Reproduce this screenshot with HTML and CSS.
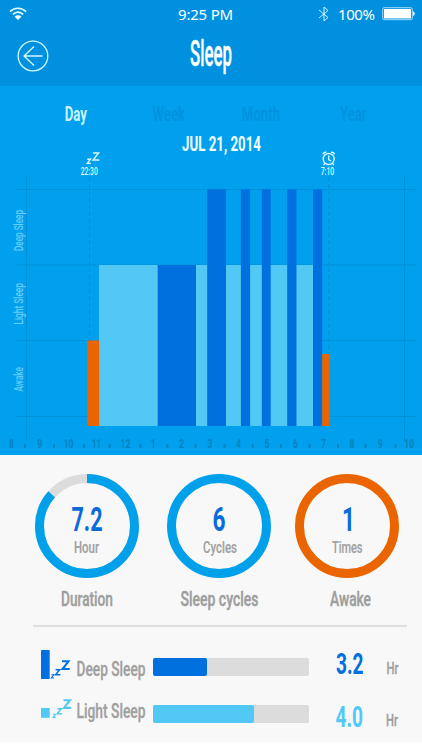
FILE: index.html
```html
<!DOCTYPE html>
<html lang="en">

<head>
    <meta charset="UTF-8">
    <meta name="viewport" content="width=device-width, initial-scale=1.0">
    <title>Sleep</title>
    <link rel="stylesheet" href="styles.css">
</head>

<body>
    <header>
        <div class="status">
            <svg class="wifi" width="18" height="14" viewBox="0 0 18 14">
                <path d="M1 4.6C5.5.2 12.5.2 17 4.6M3.8 7.4C7 4.5 11 4.5 14.2 7.4" />
                <path class="solid" d="M5.500 9.4C7.5 7.8 10.5 7.8 12.5 9.4L9 13z" />
            </svg>
            <span class="clock">9:25 PM</span>
            <svg class="bluetooth" width="12" height="16" viewBox="0 0 12 16">
                <path d="M1 4l9 7.5L6 15V1l4 3.500L1 12" />
            </svg>
            <span class="percent">100%</span>
            <svg class="battery" width="33" height="14" viewBox="0 0 33 14">
                <rect class="case" x=".7" y=".7" width="29.6" height="12" rx="1.5" />
                <rect class="solid" x="2" y="2" width="27" height="9.5" rx=".5" />
                <path class="solid" d="M31 4.5c2.3 .5 2.3 3.9 0 4.4z" />
            </svg>
        </div>
        <div class="titlebar">
            <svg class="back" width="32" height="32" viewBox="0 0 32 32">
                <circle cx="16" cy="16" r="14.8" />
                <path d="M25.5 16H7M17 6.5L7 16l10 9.5" />
            </svg>
            <svg class="title" width="44" height="40" viewBox="0 0 44 40">
                <text x="1" y="28.5" textLength="42" lengthAdjust="spacingAndGlyphs">Sleep</text>
            </svg>
        </div>
    </header>

    <section class="day">
        <nav class="tabs">
            <a class="active"><span>Day</span></a>
            <a><span>Week</span></a>
            <a><span>Month</span></a>
            <a><span>Year</span></a>
        </nav>
        <svg class="chart" width="422" height="325" viewBox="0 130 422 325">
            <text class="date" x="182" y="151.3" textLength="79" lengthAdjust="spacingAndGlyphs">JUL 21, 2014</text>

            <g class="grid">
                <path d="M17 189.5H417M17 265H417M17 340.5H417M17 416.5H417M26.5 176V442M404.5 176V440" />
                <path class="dashed" d="M89.5 177V429M328.7 177V429" />
            </g>

            <g class="light">
                <rect x="99" y="265" width="59" height="161" />
                <rect x="196" y="265" width="117" height="161" />
            </g>
            <g class="deep">
                <rect x="157.7" y="265" width="38.3" height="161" />
                <rect x="207.2" y="189.3" width="18.8" height="236.7" />
                <rect x="240.9" y="189.3" width="9.2" height="236.7" />
                <rect x="261.8" y="189.3" width="8.9" height="236.7" />
                <rect x="287.2" y="189.3" width="9.3" height="236.7" />
                <rect x="313" y="189.3" width="9.2" height="236.7" />
            </g>
            <g class="awake">
                <rect x="87.2" y="340.5" width="11.9" height="85.5" />
                <rect x="322.2" y="354" width="7.3" height="72" />
            </g>

            <!-- fell asleep / alarm -->
            <g class="marker">
                <path d="M87.3 159.2h3.200l-3.200 4.200h3.600M93 153h5.600l-5.600 7h6.400" />
                <text x="80.7" y="175.2" textLength="17" lengthAdjust="spacingAndGlyphs">22:30</text>
                <circle cx="328.7" cy="159" r="5.5" />
                <path d="M328.700 155.500V159.500L331 161M322.8 154.3a3 3 0 0 1 3.6-1.9M334.6 154.3a3 3 0 0 0-3.6-1.900M325 163.3l-1.5 1.8M332.400 163.3l1.5 1.8" />
                <text x="320.7" y="175.2" textLength="13.5" lengthAdjust="spacingAndGlyphs">7:10</text>
            </g>

            <g class="stages">
                <text transform="translate(23 251) rotate(-90)" textLength="41" lengthAdjust="spacingAndGlyphs">Deep Sleep</text>
                <text transform="translate(23 324.5) rotate(-90)" textLength="41.5" lengthAdjust="spacingAndGlyphs">Light Sleep</text>
                <text transform="translate(23 391.5) rotate(-90)" textLength="24.5" lengthAdjust="spacingAndGlyphs">Awake</text>
            </g>

            <g class="hours">
                <text x="9" y="448" textLength="5" lengthAdjust="spacingAndGlyphs">8</text>
                <text x="37.3" y="448" textLength="5" lengthAdjust="spacingAndGlyphs">9</text>
                <text x="63.5" y="448" textLength="10" lengthAdjust="spacingAndGlyphs">10</text>
                <text x="92" y="448" textLength="9" lengthAdjust="spacingAndGlyphs">11</text>
                <text x="120.5" y="448" textLength="10" lengthAdjust="spacingAndGlyphs">12</text>
                <text x="150.8" y="448" textLength="5" lengthAdjust="spacingAndGlyphs">1</text>
                <text x="179" y="448" textLength="5" lengthAdjust="spacingAndGlyphs">2</text>
                <text x="207.5" y="448" textLength="5" lengthAdjust="spacingAndGlyphs">3</text>
                <text x="236" y="448" textLength="5" lengthAdjust="spacingAndGlyphs">4</text>
                <text x="264.5" y="448" textLength="5" lengthAdjust="spacingAndGlyphs">5</text>
                <text x="292.7" y="448" textLength="5" lengthAdjust="spacingAndGlyphs">6</text>
                <text x="321" y="448" textLength="5" lengthAdjust="spacingAndGlyphs">7</text>
                <text x="349.5" y="448" textLength="5" lengthAdjust="spacingAndGlyphs">8</text>
                <text x="377.7" y="448" textLength="5" lengthAdjust="spacingAndGlyphs">9</text>
                <text x="404" y="448" textLength="10" lengthAdjust="spacingAndGlyphs">10</text>
                <path d="M25 444v4M54 444v4M84 444v4M109.5 444v4M140.3 444v4M167.3 444v4M195.5 444v4M224.5 444v4M252.7 444v4M281 444v4M309.5 444v4M338 444v4M365.5 444v4M395.5 444v4" />
            </g>
        </svg>
    </section>

    <section class="rings">
        <svg width="104" height="140" viewBox="0 0 104 140">
            <circle class="track" cx="52" cy="52" r="47.5" />
            <circle class="value" cx="52" cy="52" r="47.5" pathLength="360" stroke-dasharray="312 360" transform="rotate(-90 52 52)" />
            <text class="number" x="36.5" y="57" textLength="31" lengthAdjust="spacingAndGlyphs">7.2</text>
            <text class="unit" x="39" y="79.3" textLength="25" lengthAdjust="spacingAndGlyphs">Hour</text>
            <text class="caption" x="26" y="132" textLength="52" lengthAdjust="spacingAndGlyphs">Duration</text>
        </svg>
        <svg width="104" height="140" viewBox="0 0 104 140">
            <circle class="value" cx="52" cy="52" r="47.5" />
            <text class="number" x="45.5" y="57" textLength="13" lengthAdjust="spacingAndGlyphs">6</text>
            <text class="unit" x="36" y="79.3" textLength="34" lengthAdjust="spacingAndGlyphs">Cycles</text>
            <text class="caption" x="13.5" y="132" textLength="78" lengthAdjust="spacingAndGlyphs">Sleep cycles</text>
        </svg>
        <svg width="104" height="140" viewBox="0 0 104 140">
            <circle class="value orange" cx="52" cy="52" r="47.5" />
            <text class="number" x="47" y="57" textLength="13" lengthAdjust="spacingAndGlyphs">1</text>
            <text class="unit" x="37" y="79.3" textLength="30.5" lengthAdjust="spacingAndGlyphs">Times</text>
            <text class="caption" x="35" y="132" textLength="41" lengthAdjust="spacingAndGlyphs">Awake</text>
        </svg>
    </section>

    <section class="totals">
        <div class="row deep-row">
            <svg width="106" height="36" viewBox="0 0 106 36">
                <rect x="0" y="1" width="8.7" height="29" rx=".8" />
                <path class="z" d="M10.3 25.800h2.500l-2.500 3.200h2.800" />
                <path class="z mid" d="M14.6 20.800h4l-4 5h4.800" />
                <path class="z big" d="M21 12.300h6.500l-6 7.700h7.200" />
                <text class="name" x="35.5" y="27.2" textLength="69" lengthAdjust="spacingAndGlyphs">Deep Sleep</text>
            </svg>
            <div class="bar"><div class="fill" style="width: 35%"></div></div>
            <svg width="64" height="36" viewBox="0 0 64 36">
                <text class="hours-total" x="0" y="25.2" textLength="27.5" lengthAdjust="spacingAndGlyphs">3.2</text>
                <text class="hr" x="50.5" y="25.2" textLength="12" lengthAdjust="spacingAndGlyphs">Hr</text>
            </svg>
        </div>
        <div class="row light-row">
            <svg width="106" height="36" viewBox="0 0 106 36">
                <rect x="0" y="12" width="8.7" height="9.8" />
                <path class="z" d="M12 18.200h2.500l-2.500 3.200h2.800" />
                <path class="z mid" d="M16.300 12.700h4l-4 5h4.800" />
                <path class="z big" d="M22.500 4.200h6.500l-6 7.700h7.200" />
                <text class="name" x="35.5" y="22.3" textLength="69" lengthAdjust="spacingAndGlyphs">Light Sleep</text>
            </svg>
            <div class="bar"><div class="fill" style="width: 65%"></div></div>
            <svg width="64" height="36" viewBox="0 0 64 36">
                <text class="hours-total" x="-.5" y="30.5" textLength="27.5" lengthAdjust="spacingAndGlyphs">4.0</text>
                <text class="hr" x="50" y="30" textLength="12" lengthAdjust="spacingAndGlyphs">Hr</text>
            </svg>
        </div>
    </section>
</body>

</html>
```
FILE: styles.css
```css
* {
    margin: 0;
    padding: 0;
    box-sizing: border-box;
}

body {
    width: 422px;
    height: 750px;
    overflow: hidden;
    background-color: #f8f8f8;
    border-bottom: 8px solid #fff;
    font-family: Roboto, sans-serif;
}

svg {
    display: block;
    flex: none;
    overflow: visible;
}

/* header */
header {
    height: 86px;
    background-color: #0090e0;
    color: #fff;
}

.status {
    display: flex;
    height: 28px;
    padding: 6px 6px 0 9px;
    font-family: "Noto Sans", sans-serif;
    font-size: 15px;
    line-height: 16px;
}

.status svg {
    fill: none;
    stroke: #e8ffff;
}

.status .solid {
    fill: #fff;
    stroke: none;
}

.wifi {
    margin-top: 1px;
    stroke-width: 1.6;
}

.clock {
    width: 56px;
    margin-left: 151px;
    white-space: nowrap;
    letter-spacing: -.2px;
}

.bluetooth {
    margin-left: 84px;
    stroke-width: .9;
}

.percent {
    width: 38px;
    margin-left: 8px;
    letter-spacing: -.4px;
}

.battery {
    margin: 1px 0 0 6px;
}

.battery .case {
    stroke: #a5dcfa;
}

.titlebar {
    display: flex;
    padding: 9px 0 0 16.5px;
}

.back {
    margin-top: 2.5px;
    fill: none;
    stroke: #d5faff;
    stroke-width: 1.3;
}

.title {
    margin-left: 140px;
    fill: #fff;
    stroke: #fff;
    stroke-width: .4;
    font-size: 36px;
    font-weight: 500;
}

/* chart */
.day {
    height: 369px;
    background-color: #00a0ee;
}

.tabs {
    display: grid;
    grid-template-columns: repeat(4, 92.5px);
    height: 44px;
    padding: 15px 0 0 30px;
    text-align: center;
    color: #0192df;
    font-size: 20px;
    font-weight: 700;
    line-height: 26px;
}

.tabs span {
    display: inline-block;
    transform: scaleX(.66);
}

.tabs .active {
    color: #c8f4ff;
}

.date {
    fill: #f0ffff;
    font-size: 20px;
    font-weight: 700;
}

.grid {
    fill: none;
    stroke: #0090d8;
}

.dashed {
    stroke-dasharray: 4 3;
}

.light {
    fill: #52c8f4;
}

.deep {
    fill: #0070de;
}

.awake {
    fill: #ea6400;
}

.marker {
    fill: none;
    stroke: #d8faff;
    stroke-width: 1.4;
}

.marker text {
    fill: #d8faff;
    stroke: none;
    font-size: 10px;
    font-weight: 500;
}

.stages {
    fill: #68ccf8;
    font-size: 12px;
    font-weight: 500;
}

.hours {
    fill: #0582bf;
    stroke-width: 2;
    font-size: 12px;
    font-weight: 700;
}

.hours path {
    stroke: #0582bf;
}

/* rings */
.rings {
    display: flex;
    gap: 28px;
    height: 170px;
    padding: 19px 0 0 35px;
}

.rings svg:nth-child(3) {
    margin-left: -4px;
}

.rings circle {
    fill: none;
    stroke-width: 9;
}

.track {
    stroke: #dcdcdc;
}

.value {
    stroke: #00a0ea;
}

.rings .orange {
    stroke: #ea6400;
}

.number {
    fill: #0a6bdb;
    font-size: 33px;
    font-weight: 700;
}

.unit {
    fill: #a2a2a2;
    stroke: #a2a2a2;
    stroke-width: .2;
    font-size: 16px;
    font-weight: 500;
}

.caption {
    fill: #9e9e9e;
    stroke: #9e9e9e;
    stroke-width: .4;
    font-size: 19.5px;
    font-weight: 500;
}

/* totals */
.totals {
    width: 374px;
    margin-left: 33px;
    padding: 22px 0 0 8px;
    border-top: 2px solid #dedede;
}

.row {
    display: flex;
    height: 47px;
    color: #0070de;
    fill: #0070de;
}

.light-row {
    color: #52c8f4;
    fill: #52c8f4;
}

.z {
    fill: none;
    stroke: currentColor;
    stroke-width: 1.1;
}

.mid {
    stroke-width: 1.5;
}

.big {
    stroke-width: 2.1;
}

.name,
.hr {
    fill: #a0a0a0;
    stroke: #a0a0a0;
    stroke-width: .3;
    font-size: 20px;
    font-weight: 500;
}

.hr {
    font-size: 16px;
}

.hours-total {
    font-size: 29.5px;
    font-weight: 700;
}

.bar {
    width: 155.5px;
    height: 18px;
    margin: 9px 27px 0 6px;
    border-radius: 2px;
    background-color: #dcdcdc;
}

.fill {
    height: 100%;
    border-radius: 2px;
    background-color: currentColor;
}
```
